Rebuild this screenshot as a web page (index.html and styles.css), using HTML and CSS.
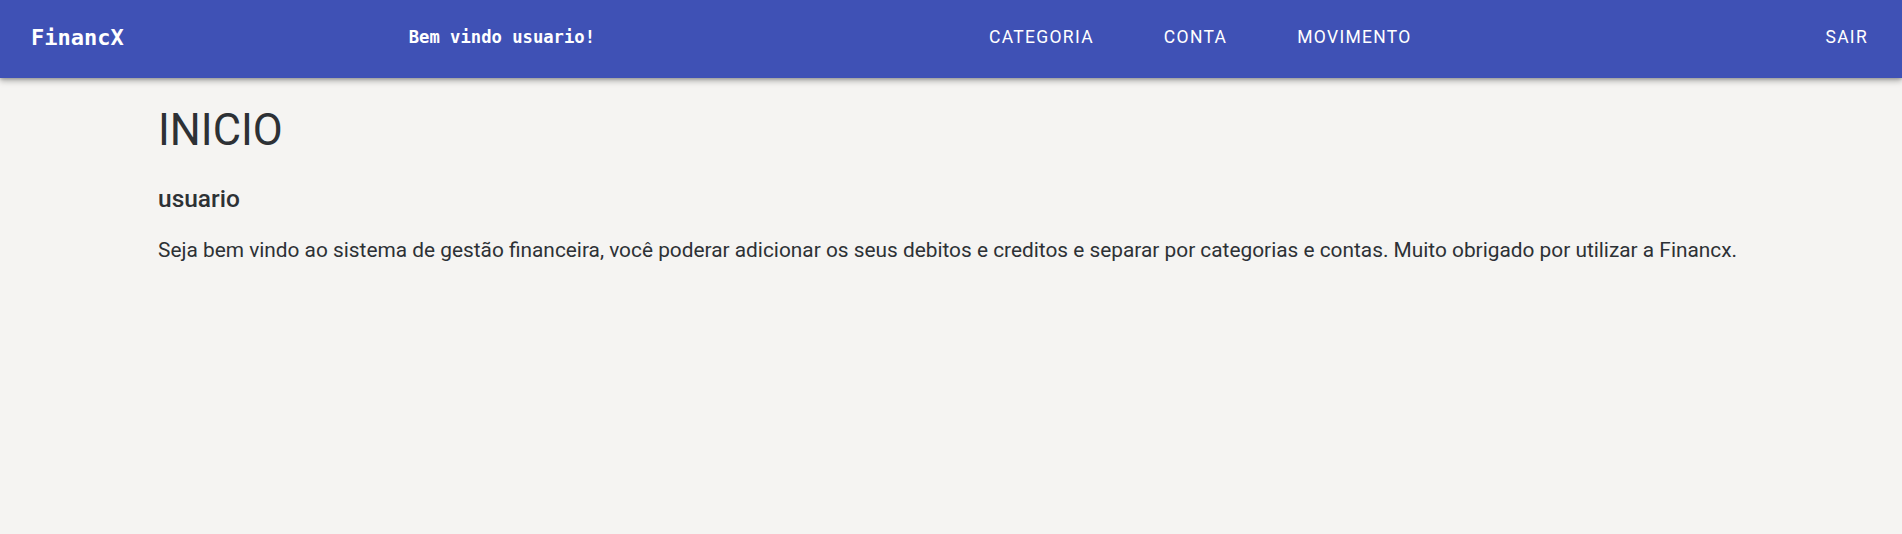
FILE: index.html
```html
<!DOCTYPE html>
<html lang="pt">
<head>
<meta charset="utf-8">
<title>FinancX</title>
<link rel="stylesheet" href="styles.css">
</head>
<body>
<header class="toolbar">
  <span class="brand">FinancX</span>
  <span class="welcome">Bem vindo usuario!</span>
  <nav class="nav">
    <a class="nav-link">CATEGORIA</a>
    <a class="nav-link">CONTA</a>
    <a class="nav-link">MOVIMENTO</a>
  </nav>
  <a class="nav-link logout">SAIR</a>
</header>
<main class="content">
  <h1 class="title">INICIO</h1>
  <h2 class="subtitle">usuario</h2>
  <p class="text">Seja bem vindo ao sistema de gestão financeira, você poderar adicionar os seus debitos e creditos e separar por categorias e contas. Muito obrigado por utilizar a Financx.</p>
</main>
</body>
</html>
```

FILE: styles.css
```css
html, body {
  margin: 0;
  padding: 0;
}
body {
  background: #f5f4f2;
  color: #2d3135;
  font-family: Roboto, "Noto Sans", sans-serif;
  height: 534px;
  overflow: hidden;
}
.toolbar {
  display: flex;
  align-items: center;
  height: 78px;
  padding: 0 34px 0 31px;
  background: #3f51b5;
  color: #fff;
  box-shadow: 0 3px 6px rgba(0,0,0,0.28), 0 1px 3px rgba(0,0,0,0.2);
  position: relative;
  z-index: 1;
}
.brand {
  font-family: "DejaVu Sans Mono", monospace;
  font-weight: bold;
  font-size: 22px;
  padding-bottom: 4px;
}
.welcome {
  font-family: "DejaVu Sans Mono", monospace;
  font-weight: bold;
  font-size: 17.2px;
  margin-left: 285px;
  padding-bottom: 4px;
}
.nav {
  display: flex;
  gap: 70px;
  margin-left: 394px;
}
.nav-link {
  font-family: Roboto, sans-serif;
  font-size: 17.5px;
  font-weight: 400;
  letter-spacing: 1.3px;
  color: #fff;
  padding-bottom: 5px;
}
.logout {
  margin-left: auto;
}
.content {
  padding: 0 100px 0 158px;
}
.title {
  margin: 0;
  padding-top: 27px;
  font-size: 43.5px;
  font-weight: 400;
  line-height: 52px;
}
.subtitle {
  margin: 26px 0 0;
  font-size: 24.5px;
  font-weight: 500;
  line-height: 32px;
}
.text {
  margin: 21px 0 0;
  font-size: 20.85px;
  line-height: 28px;
}
```
